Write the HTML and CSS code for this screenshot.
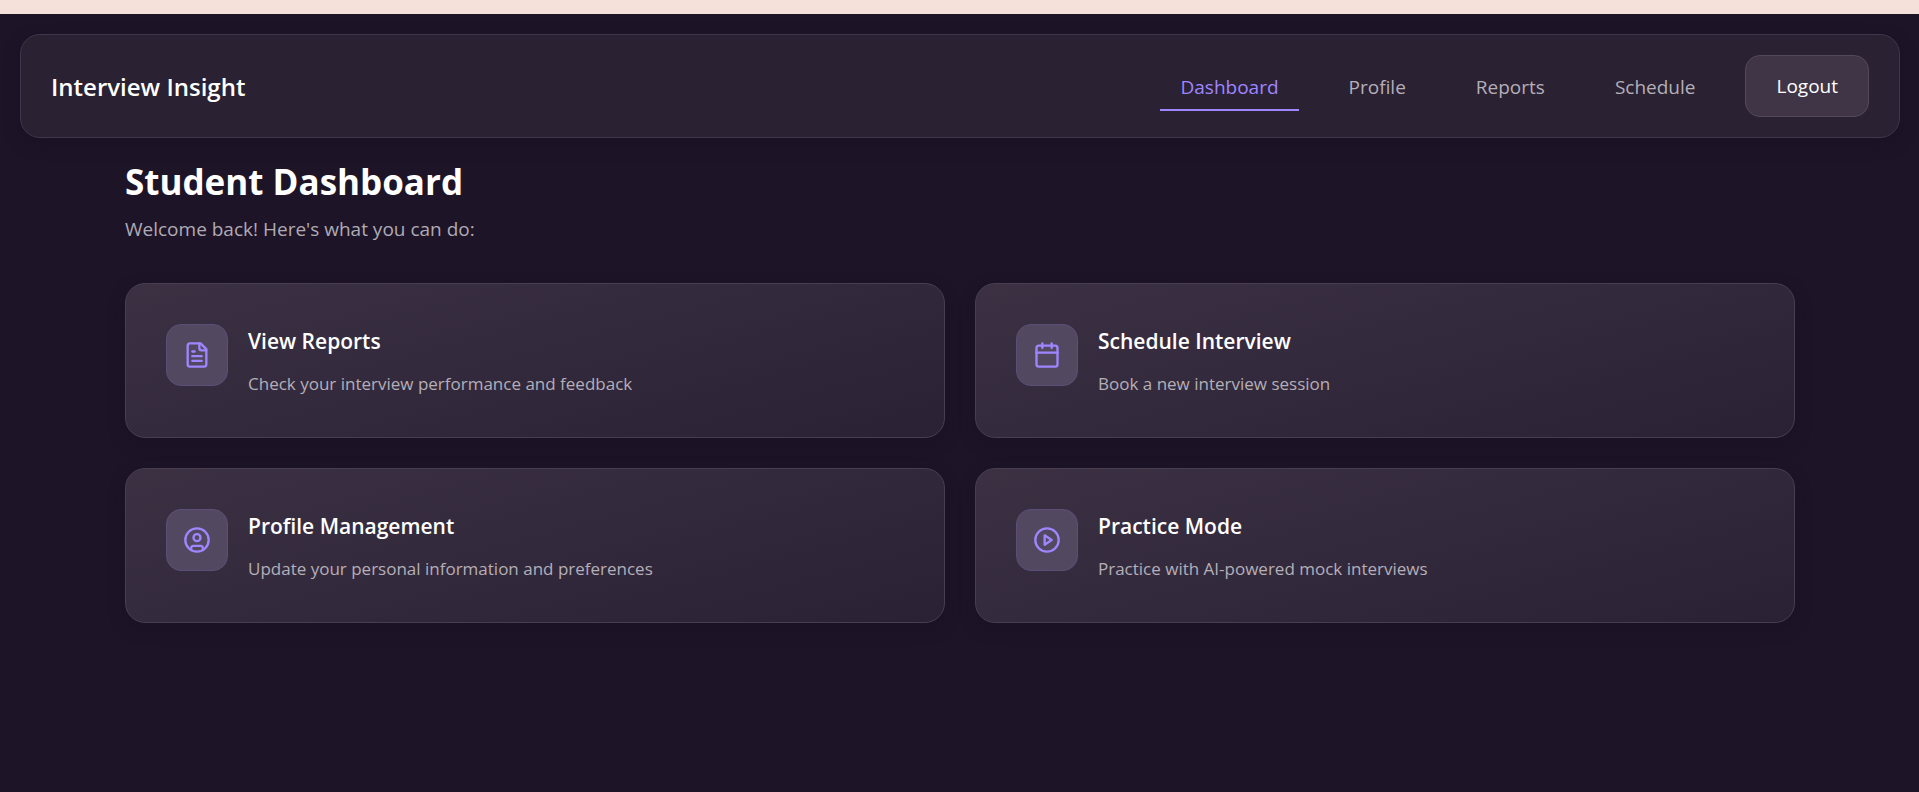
FILE: index.html
```html
<!DOCTYPE html>
<html lang="en">
<head>
<meta charset="utf-8">
<meta name="viewport" content="width=device-width, initial-scale=1">
<title>Interview Insight</title>
<link rel="stylesheet" href="styles.css">
</head>
<body>
<div class="app">
  <header class="navbar">
    <a class="brand" href="#">Interview Insight</a>
    <nav class="nav-links">
      <a class="nav-link active" href="#">Dashboard</a>
      <a class="nav-link" href="#">Profile</a>
      <a class="nav-link" href="#">Reports</a>
      <a class="nav-link" href="#">Schedule</a>
      <button class="logout" type="button">Logout</button>
    </nav>
  </header>
  <main class="dashboard">
    <h1 class="title">Student Dashboard</h1>
    <p class="subtitle">Welcome back! Here's what you can do:</p>
    <div class="cards">
      <a class="card" href="#">
        <span class="card-icon">
          <svg viewBox="0 0 24 24"><path d="M15 2H6a2 2 0 0 0-2 2v16a2 2 0 0 0 2 2h12a2 2 0 0 0 2-2V7z"/><path d="M14 2v4a2 2 0 0 0 2 2h4M16 13H8M16 17H8M10 9H8"/></svg>
        </span>
        <span class="card-body">
          <strong class="card-title">View Reports</strong>
          <span class="card-text">Check your interview performance and feedback</span>
        </span>
      </a>
      <a class="card" href="#">
        <span class="card-icon">
          <svg viewBox="0 0 24 24"><rect x="3" y="4" width="18" height="18" rx="2"/><path d="M16 2v4M8 2v4M3 10h18"/></svg>
        </span>
        <span class="card-body">
          <strong class="card-title">Schedule Interview</strong>
          <span class="card-text">Book a new interview session</span>
        </span>
      </a>
      <a class="card" href="#">
        <span class="card-icon">
          <svg viewBox="0 0 24 24"><circle cx="12" cy="12" r="10"/><circle cx="12" cy="10" r="3"/><path d="M7 20.66V19a2 2 0 0 1 2-2h6a2 2 0 0 1 2 2v1.66"/></svg>
        </span>
        <span class="card-body">
          <strong class="card-title">Profile Management</strong>
          <span class="card-text">Update your personal information and preferences</span>
        </span>
      </a>
      <a class="card" href="#">
        <span class="card-icon">
          <svg viewBox="0 0 24 24"><circle cx="12" cy="12" r="10"/><path d="M10 8l6 4-6 4z"/></svg>
        </span>
        <span class="card-body">
          <strong class="card-title">Practice Mode</strong>
          <span class="card-text">Practice with AI-powered mock interviews</span>
        </span>
      </a>
    </div>
  </main>
</div>
</body>
</html>
```
FILE: styles.css
```css
* {
  box-sizing: border-box;
}

body {
  margin: 0;
  background: #1d1427;
  color: #fff;
  font-family: "Segoe UI", "Open Sans", "Noto Sans", sans-serif;
}

a {
  color: inherit;
  text-decoration: none;
}

.app {
  min-height: 100vh;
  padding: 20px 19px 20px 20px;
  border-top: 14px solid #f5e1da;
}

.navbar {
  display: flex;
  align-items: center;
  justify-content: space-between;
  padding: 20px 30px;
  border: 1px solid #40364a;
  border-radius: 20px;
  background: #2a2133;
  box-shadow: 0 6px 16px rgba(26, 15, 32, 0.4);
}

.brand {
  padding-top: 2px;
  font-size: 24px;
  font-weight: 600;
  line-height: 32px;
}

.nav-links {
  display: flex;
  align-items: center;
  gap: 30px;
}

.nav-link {
  padding: 12px 20px 8px;
  border-bottom: 2px solid transparent;
  color: #b4afb8;
  font-size: 19px;
  font-weight: 500;
  line-height: 28px;
}

.nav-link.active {
  border-color: #9f86ff;
  color: #9f86ff;
}

.logout {
  padding: 16px 30px;
  border: 1px solid #52495b;
  border-radius: 15px;
  background: #3f3546;
  color: #fff;
  font: 500 19px/28px "Segoe UI", "Open Sans", "Noto Sans", sans-serif;
}

.dashboard {
  max-width: 1710px;
  margin: 0 auto;
  padding: 20px;
}

.title {
  margin: 0;
  font-size: 35px;
  font-weight: 700;
  line-height: 48px;
}

.subtitle {
  margin: 9px 0 40px;
  color: #b0abb4;
  font-size: 19px;
  line-height: 28px;
}

.cards {
  display: grid;
  grid-template-columns: repeat(auto-fit, minmax(600px, 1fr));
  gap: 30px;
}

.card {
  display: flex;
  align-items: flex-start;
  gap: 20px;
  padding: 40px;
  border: 1px solid #483e51;
  border-radius: 20px;
  background: linear-gradient(165deg, #3b3143, #2b2135);
  box-shadow: 0 6px 16px rgba(26, 15, 32, 0.4);
}

.card-icon {
  display: flex;
  flex: none;
  padding: 16px;
  border: 1px solid #5b4f79;
  border-radius: 15px;
  background: #524961;
}

.card-icon svg {
  display: block;
  width: 28px;
  height: 28px;
  fill: none;
  stroke: #9f86ff;
  stroke-width: 2;
  stroke-linecap: round;
  stroke-linejoin: round;
}

.card-body {
  display: flex;
  flex-direction: column;
  gap: 12px;
}

.card-title {
  font-size: 21px;
  font-weight: 600;
  line-height: 34px;
}

.card-text {
  color: #b4afb8;
  font-size: 17px;
  line-height: 27px;
}
```
